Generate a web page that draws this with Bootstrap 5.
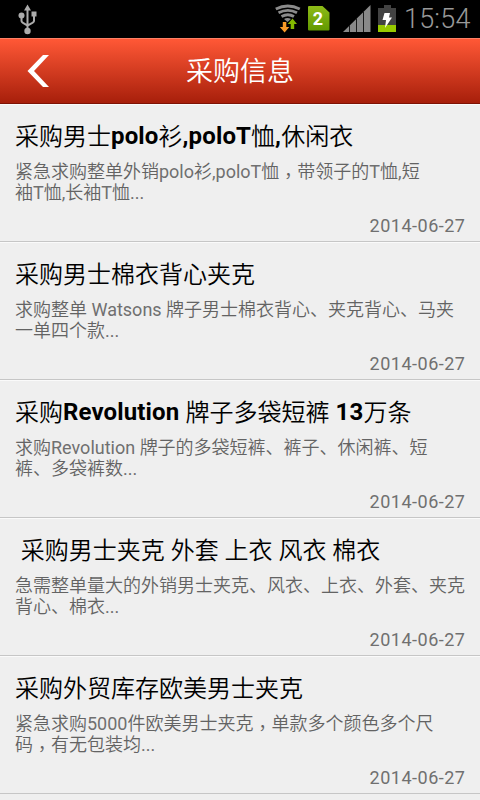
<!DOCTYPE html>
<html lang="zh-CN">
<head>
<meta charset="utf-8">
<meta name="viewport" content="width=device-width, initial-scale=1">
<title>采购信息</title>
<link href="https://cdn.jsdelivr.net/npm/bootstrap@5.3.0/dist/css/bootstrap.min.css" rel="stylesheet">
<style>
body{width:480px;height:800px;background:#efefef;font-family:Roboto,"Noto Sans CJK SC",sans-serif}
.status-bar{height:38px;background:#000}
.clock{font-size:27px;line-height:38px;color:#999;font-weight:300;width:67px;letter-spacing:.2px}
.title-bar{height:66px;background:linear-gradient(#ff5836,#a71f0b);border-top:1px solid #ff8066;border-bottom:1px solid #7e1305}
.title-bar h1{font-size:27px;line-height:66px;height:64px;font-weight:350}
.back{left:27px;top:16px;line-height:0}
.entry{height:138px;padding:18px 15px 0;border:0;border-bottom:1px solid #c6c6c6;background:#efefef;box-shadow:inset 0 1px #fafafa}
.entry h2{font-size:24px;line-height:30px;height:30px;font-weight:350;color:#000;white-space:pre}
.entry h2 b{font-weight:700;letter-spacing:.14px;line-height:1;vertical-align:1px}
.entry p{font-size:18px;line-height:21px;font-weight:350;color:#636363;margin-top:9px;height:42px}
.entry p i{font-style:normal;font-weight:400;color:#707070}
.wide-comma{font-family:"Noto Sans CJK TC",sans-serif;position:relative;top:5px;line-height:1}
.entry time{font-size:18px;line-height:20px;letter-spacing:.5px;color:#707070;margin-top:13px;margin-right:-.5px}
</style>
</head>
<body class="overflow-hidden">
<div class="status-bar d-flex align-items-center">
<svg width="400" height="38" viewBox="0 0 400 38" class="flex-shrink-0">
<g fill="none" stroke="#ababab" stroke-width="2"><path d="M27.500 10v20M21.500 16v5q0 1.500 6 4.500 6.500-3 6.500-4.500v-7"/></g>
<g fill="#ababab"><path d="M27.500 4.500l3.500 6h-7z"/><circle cx="21.500" cy="15.500" r="3"/><path d="M31.500 11.500h5v5h-5z"/><circle cx="27.500" cy="31" r="3.200"/></g>
<g fill="none" stroke="#8b8b8b" stroke-width="2.800"><path d="M275.800 9q12-6 24 0M278.500 12.800q9.500-5 18.500 0M281.500 16.500q6.500-3.500 12.500 0"/></g><path fill="#8b8b8b" d="M284 19q3.500-2 7 0l-3.500 3z"/>
<path fill="#f99a27" d="M282.800 22h3.500v5h3l-4.700 5.500-4.800-5.500h3z"/><path fill="#83b900" d="M292.500 18.500l4.500 5.500h-2.800v5h-3.500v-5h-3z"/>
<path fill="url(#sim)" d="M309 6h13.500l7 6.500v17q0 1-1 1H309q-1 0-1-1V7q0-1 1-1z"/>
<defs><linearGradient id="sim" x2="0" y2="1"><stop stop-color="#8ebb18"/><stop offset="1" stop-color="#629900"/></linearGradient></defs>
<text x="318" y="25" text-anchor="middle" font-family="Roboto" font-weight="700" font-size="18" fill="#fff">2</text>
<path fill="#898989" d="M343 32L370.500 5v27z"/><path stroke="#1b1b1b" stroke-width="1" d="M349.500 25v7M356.500 18v14M363.500 11v21"/>
<path fill="#424242" d="M384 5h7v3h5v17h-18V8h6z"/><path fill="#97c900" d="M378 25h18v7h-18z"/><path fill="#fff" d="M384.500 13h5.500l-1 4.500h3l-7 10.500 1-8h-3.500z"/>
</svg>
<div class="clock text-nowrap ms-1">15:54</div>
</div>
<header class="title-bar position-relative text-center text-white">
<a href="#" class="back position-absolute" aria-label="返回"><svg width="24" height="34" viewBox="0 0 24 34"><path fill="#fff" d="M16 0h6L7 16l15 16h-6L.500 16z"/></svg></a>
<h1 class="m-0">采购信息</h1>
</header>
<main class="list-group rounded-0">
<article class="entry list-group-item d-flex flex-column rounded-0"><h2 class="m-0">采购男士<b>polo</b>衫<b>,poloT</b>恤<b>,</b>休闲衣</h2><p class="mb-0 text-nowrap">紧急求购整单外销<i>polo</i>衫<i>,poloT</i>恤<span class="wide-comma" lang="zh-TW">，</span>带领子的<i>T</i>恤<i>,</i>短<br>袖<i>T</i>恤<i>,</i>长袖<i>T</i>恤<i>...</i></p><time class="align-self-end">2014-06-27</time></article>
<article class="entry list-group-item d-flex flex-column rounded-0"><h2 class="m-0">采购男士棉衣背心夹克</h2><p class="mb-0 text-nowrap">求购整单<i> Watsons </i>牌子男士棉衣背心、夹克背心、马夹<br>一单四个款<i>...</i></p><time class="align-self-end">2014-06-27</time></article>
<article class="entry list-group-item d-flex flex-column rounded-0"><h2 class="m-0">采购<b>Revolution </b>牌子多袋短裤<b> 13</b>万条</h2><p class="mb-0 text-nowrap">求购<i>Revolution </i>牌子的多袋短裤、裤子、休闲裤、短<br>裤、多袋裤数<i>...</i></p><time class="align-self-end">2014-06-27</time></article>
<article class="entry list-group-item d-flex flex-column rounded-0"><h2 class="m-0"> 采购男士夹克 外套 上衣 风衣 棉衣</h2><p class="mb-0 text-nowrap">急需整单量大的外销男士夹克、风衣、上衣、外套、夹克<br>背心、棉衣<i>...</i></p><time class="align-self-end">2014-06-27</time></article>
<article class="entry list-group-item d-flex flex-column rounded-0"><h2 class="m-0">采购外贸库存欧美男士夹克</h2><p class="mb-0 text-nowrap">紧急求购<i>5000</i>件欧美男士夹克<span class="wide-comma" lang="zh-TW">，</span>单款多个颜色多个尺<br>码<span class="wide-comma" lang="zh-TW">，</span>有无包装均<i>...</i></p><time class="align-self-end">2014-06-27</time></article>
</main>
<script src="https://cdn.jsdelivr.net/npm/bootstrap@5.3.0/dist/js/bootstrap.bundle.min.js"></script>
</body>
</html>
